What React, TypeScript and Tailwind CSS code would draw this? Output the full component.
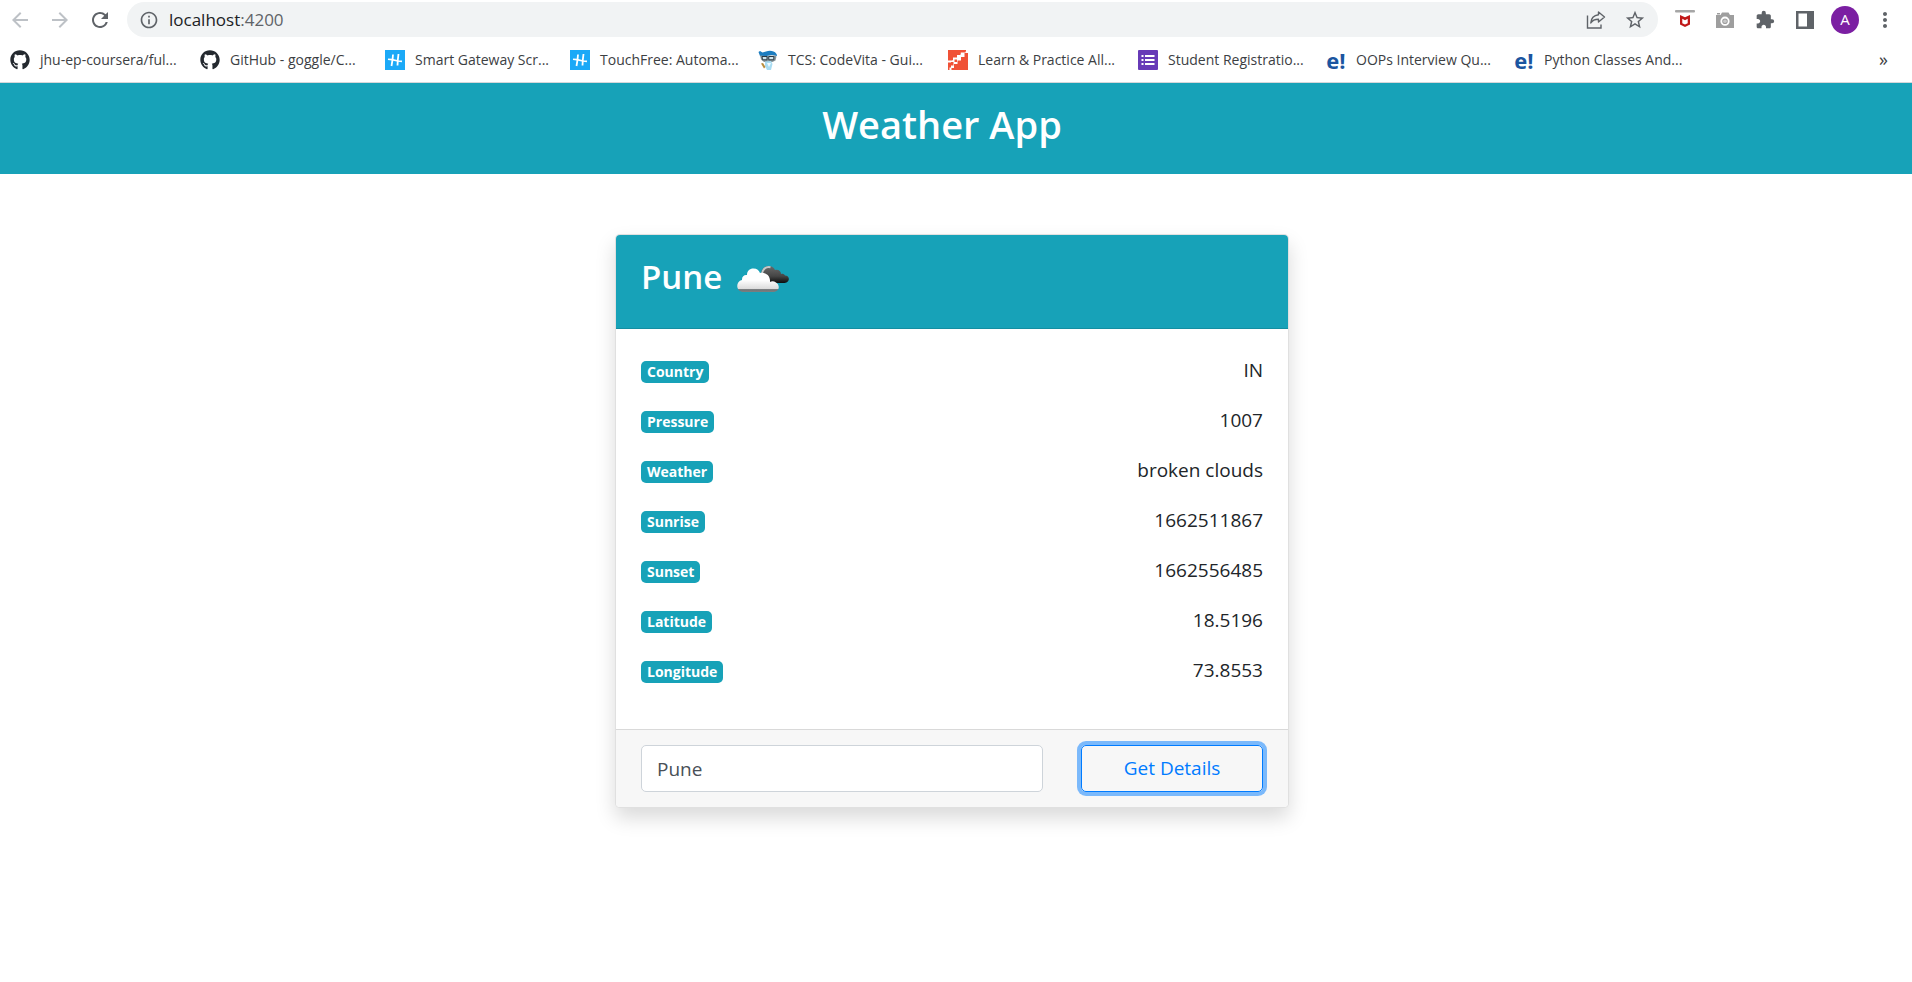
import type { ReactNode } from "react";
import { FaGithub } from "react-icons/fa";
import {
  MdArrowBack,
  MdArrowForward,
  MdRefresh,
  MdInfoOutline,
  MdStarBorder,
  MdExtension,
  MdMoreVert,
} from "react-icons/md";

const sans = "font-['Open_Sans','Noto_Sans',sans-serif]";

function HackerEarthIcon() {
  return (
    <svg viewBox="0 0 20 20" className="size-5">
      <rect width="20" height="20" fill="#1ba9f7" />
      <g stroke="#fff" fill="none">
        <path d="M8 4.500 7.500 10 6.500 16M13.500 4 12.800 10l-.3 5.500" strokeWidth="1.800" />
        <path d="M3 9.200 7 9.600 13 11l4 .4" strokeWidth="1.600" />
      </g>
    </svg>
  );
}

function MascotIcon() {
  return (
    <svg viewBox="0 0 20 20" className="size-5">
      <path d="M.5 2 2 1l2.500 1.500L8 1.500Q12 0 15.500 1.500q3.500 1.500 3.500 4.500l-5-1-8 1.500L2 6z" fill="#1c7dc0" />
      <path d="M2 5.500 8 6l9-.5 1.500 1-1 4-3 1.500H6L3 9.500z" fill="#8a979c" />
      <path d="M4 6.500h5v3.300H4.500zM10.800 6.500h5v3.300h-5z" fill="#cfe6ee" stroke="#2b3943" />
      <path d="m7 11.500 6-.5 1.500 3L13 20H9l-2-4z" fill="#a9dcf2" />
      <path d="m3 13.500 2-.5 2.500 4L6 18.500z" fill="#b98d3d" />
      <path d="m9 13 2 4 2-4z" fill="#eefaff" />
    </svg>
  );
}

function StairsIcon() {
  return (
    <svg viewBox="0 0 20 20" className="size-5">
      <rect width="20" height="20" fill="#f05136" />
      <path
        d="M20 0v3h-3.500v4H13v3.500H9.500V14H6v4H3.500v2H0v-9.500h4.500V7.500H9V5h3.500V2.500h5V0z"
        fill="#fff"
      />
      <path d="M0 0h18v1.500h-5.500V4H8.500v3H5v3H0z" fill="#f05136" />
      <path d="M0 12.500h3v5H1.500V20H0zM6.500 9.500H9V12H5.500v3.500H3V12h3.500z" fill="#f05136" />
    </svg>
  );
}

function FormsIcon() {
  return (
    <svg viewBox="0 0 20 20" className="size-5">
      <rect width="20" height="20" rx="1" fill="#673ab7" />
      <path
        d="M3.500 5h2v2h-2zM7 5h9.500v2H7zM3.500 9h2v2h-2zM7 9h9.500v2H7zM3.500 13h2v2h-2zM7 13h9.500v2H7z"
        fill="#fff"
      />
    </svg>
  );
}

function EdurekaIcon() {
  return (
    <span className="flex size-5 items-center justify-center text-[22px] leading-5 font-bold text-[#1b55a0]">e!</span>
  );
}

const bookmarks: { label: string; width: string; icon: ReactNode }[] = [
  { label: "jhu-ep-coursera/ful...", width: "w-[190px]", icon: <FaGithub className="size-5 text-[#24292f]" /> },
  { label: "GitHub - goggle/C...", width: "w-[185px]", icon: <FaGithub className="size-5 text-[#24292f]" /> },
  { label: "Smart Gateway Scr...", width: "w-[185px]", icon: <HackerEarthIcon /> },
  { label: "TouchFree: Automa...", width: "w-[188px]", icon: <HackerEarthIcon /> },
  { label: "TCS: CodeVita - Gui...", width: "w-[190px]", icon: <MascotIcon /> },
  { label: "Learn & Practice All...", width: "w-[190px]", icon: <StairsIcon /> },
  { label: "Student Registratio...", width: "w-[188px]", icon: <FormsIcon /> },
  { label: "OOPs Interview Qu...", width: "w-[188px]", icon: <EdurekaIcon /> },
  { label: "Python Classes And...", width: "w-[190px]", icon: <EdurekaIcon /> },
];

const details = [
  ["Country", "IN"],
  ["Pressure", "1007"],
  ["Weather", "broken clouds"],
  ["Sunrise", "1662511867"],
  ["Sunset", "1662556485"],
  ["Latitude", "18.5196"],
  ["Longitude", "73.8553"],
];

function ShareIcon() {
  return (
    <svg viewBox="0 0 20 20" className="size-5" fill="none" stroke="#5f6368" strokeWidth="1.4">
      <path d="M1.500 5.500v12.500h13.500v-3.500" />
      <path d="M12.500 2 18.500 7l-6 5V9.200C8.500 9.200 6.200 10.500 4.800 13c.3-4.500 3-7.600 7.700-8.200z" strokeLinejoin="round" />
    </svg>
  );
}

function ShieldIcon() {
  return (
    <svg viewBox="0 0 20 20" className="size-5">
      <rect width="20" height="2.500" rx="1" fill="#a6a6a6" />
      <path d="M5 5 10 7.300 15 5v9.500L10 17l-5-2.500z" fill="#c01818" />
      <path d="m7.300 8.700 2.700 1.500 2.700-1.500v4.500L10 14.500l-2.700-1.300z" fill="#fff" />
    </svg>
  );
}

function CameraIcon() {
  return (
    <svg viewBox="0 0 20 20" className="size-5">
      <path d="M1 5h4.500L7 2.500h6.500L15 5h4v13H1z" fill="#9e9e9e" />
      <path d="M2 3h3v1.500H2z" fill="#9e9e9e" />
      <circle cx="10" cy="11.200" r="3.700" fill="none" stroke="#fff" strokeWidth="1.800" />
      <circle cx="10" cy="11.200" r="1.800" fill="#c9c9c9" />
    </svg>
  );
}

function SidePanelIcon() {
  return (
    <svg viewBox="0 0 20 20" className="size-5">
      <path d="M1 1h18v18H1zM3.500 3.500v13h8.500v-13z" fill="#5f6368" fillRule="evenodd" />
    </svg>
  );
}

function BrokenCloudsIcon() {
  return (
    <svg viewBox="0 0 54 30" className="h-[30px] w-[54px]" role="img" aria-label="broken clouds">
      <defs>
        <linearGradient id="front" x1="0" y1="4" x2="0" y2="28" gradientUnits="userSpaceOnUse">
          <stop offset="0.5" stopColor="#fff" />
          <stop offset="0.86" stopColor="#dcdcdc" />
          <stop offset="0.9" stopColor="#6f7375" />
          <stop offset="1" stopColor="#7b8082" />
        </linearGradient>
        <linearGradient id="back" x1="0" y1="2" x2="0" y2="19" gradientUnits="userSpaceOnUse">
          <stop offset="0" stopColor="#6a6a6a" />
          <stop offset="0.6" stopColor="#454545" />
          <stop offset="1" stopColor="#0c0c0c" />
        </linearGradient>
      </defs>
      <path
        d="M24 10C24 5 27.500 2 31.500 2c3 0 5.500 1.500 6.500 4 3.500-.8 6 1.200 6 4 1.500-.5 3.500.3 4 1.500 5 0 5.500 7-.5 7.500H32z"
        fill="url(#back)"
      />
      <path d="M25 9.500C25.500 5 29 2.300 33.500 3.200" fill="none" stroke="#c4c8c9" strokeWidth="2" />
      <path
        d="M6 28C-1.500 27 -1.500 17.500 5 16c-.2-4 2.500-5.500 5-5 0-4 2.500-6.500 6.500-6.500 3.500 0 5.500 1.800 6.500 4.500 6-1 10.500 3 10 9 1.800-1 4-.8 6 .5 4 2.500 4 8.500-2 9.500z"
        fill="url(#front)"
      />
    </svg>
  );
}

export default function App() {
  return (
    <div className={`min-h-screen bg-white text-[#212529] ${sans}`}>
      <div className="border-b border-[#d5d7da]">
        <nav aria-label="Browser" className="flex items-center pt-[2px] pr-[15px] pl-[8px] text-[#5f6368]">
          <button aria-label="Back" className="w-10 text-[#bdc1c6]"><MdArrowBack className="size-6" /></button>
          <button aria-label="Forward" className="w-10 text-[#bdc1c6]"><MdArrowForward className="size-6" /></button>
          <button aria-label="Reload" className="w-[39px]"><MdRefresh className="size-6" /></button>
          <div className="flex h-[35px] flex-1 items-center rounded-full bg-[#f1f3f4] pr-[12px] pl-[12px]">
            <MdInfoOutline className="size-5" />
            <span className="ml-[10px] flex-1 text-[17px] leading-6">
              <span className="text-[#202124]">localhost</span>:4200
            </span>
            <button aria-label="Share" className="w-[38px]"><ShareIcon /></button>
            <button aria-label="Bookmark this page"><MdStarBorder className="size-[22px]" /></button>
          </div>
          <div className="ml-[17px] flex items-center gap-5">
            <button aria-label="Shield"><ShieldIcon /></button>
            <button aria-label="Screenshot"><CameraIcon /></button>
            <button aria-label="Extensions"><MdExtension className="size-5" /></button>
            <button aria-label="Side panel"><SidePanelIcon /></button>
          </div>
          <button aria-label="Profile" className="mr-[14px] ml-[16px] size-7 rounded-full bg-[#7b1fa2] text-[15px] text-white">A</button>
          <button aria-label="Menu"><MdMoreVert className="size-6" /></button>
        </nav>
        <div className="flex h-[45px] items-center pr-[24px] pl-[10px] text-[14px] text-[#3c4043]">
          {bookmarks.map((b) => (
            <a key={b.label} href="#" className={`flex shrink-0 items-center gap-[10px] whitespace-nowrap ${b.width}`}>
              {b.icon}
              {b.label}
            </a>
          ))}
          <button aria-label="More bookmarks" className="ml-auto text-[18px]">»</button>
        </div>
      </div>

      <header className="bg-[#17a2b8] pt-[17px] pr-7 pb-[26px] text-center text-white">
        <h1 className="text-[38px] leading-[48px] font-semibold">Weather App</h1>
      </header>

      <main className="flex justify-center pt-15 pr-2">
        <section className="w-full max-w-[674px] rounded-[5px] border border-black/12 bg-white shadow-[0_10px_20px_rgba(0,0,0,0.15)]">
          <div className="flex h-[94px] gap-[15px] rounded-t-[4px] border-b border-black/12 bg-[#17a2b8] px-[25px] pt-[22px] text-white">
            <h2 className="text-[33px] leading-[40px] font-semibold">Pune</h2>
            <div className="pt-[7px]"><BrokenCloudsIcon /></div>
          </div>
          <dl className="px-[25px] pt-[16px] pb-[34px]">
            {details.map(([name, value]) => (
              <div key={name} className="flex h-[50px] items-baseline justify-between">
                <dt className="rounded-[5px] bg-[#17a2b8] px-[6px] text-[14px] leading-[22px] font-bold text-white">{name}</dt>
                <dd className="text-[19px] leading-[50px]">{value}</dd>
              </div>
            ))}
          </dl>
          <form
            className="flex gap-[38px] rounded-b-[4px] border-t border-black/12 bg-[#f7f7f7] px-[25px] py-[15px]"
            onSubmit={(e) => e.preventDefault()}
          >
            <input
              aria-label="City"
              defaultValue="Pune"
              className="h-[47px] min-w-0 flex-1 rounded-[5px] border border-[#ced4da] bg-white px-[15px] text-[19px] text-[#495057] outline-none"
            />
            <button className="h-[47px] w-[182px] rounded-[5px] border border-[#007bff] text-[19px] text-[#007bff] shadow-[0_0_0_4px_rgba(0,123,255,0.5)]">
              Get Details
            </button>
          </form>
        </section>
      </main>
    </div>
  );
}
